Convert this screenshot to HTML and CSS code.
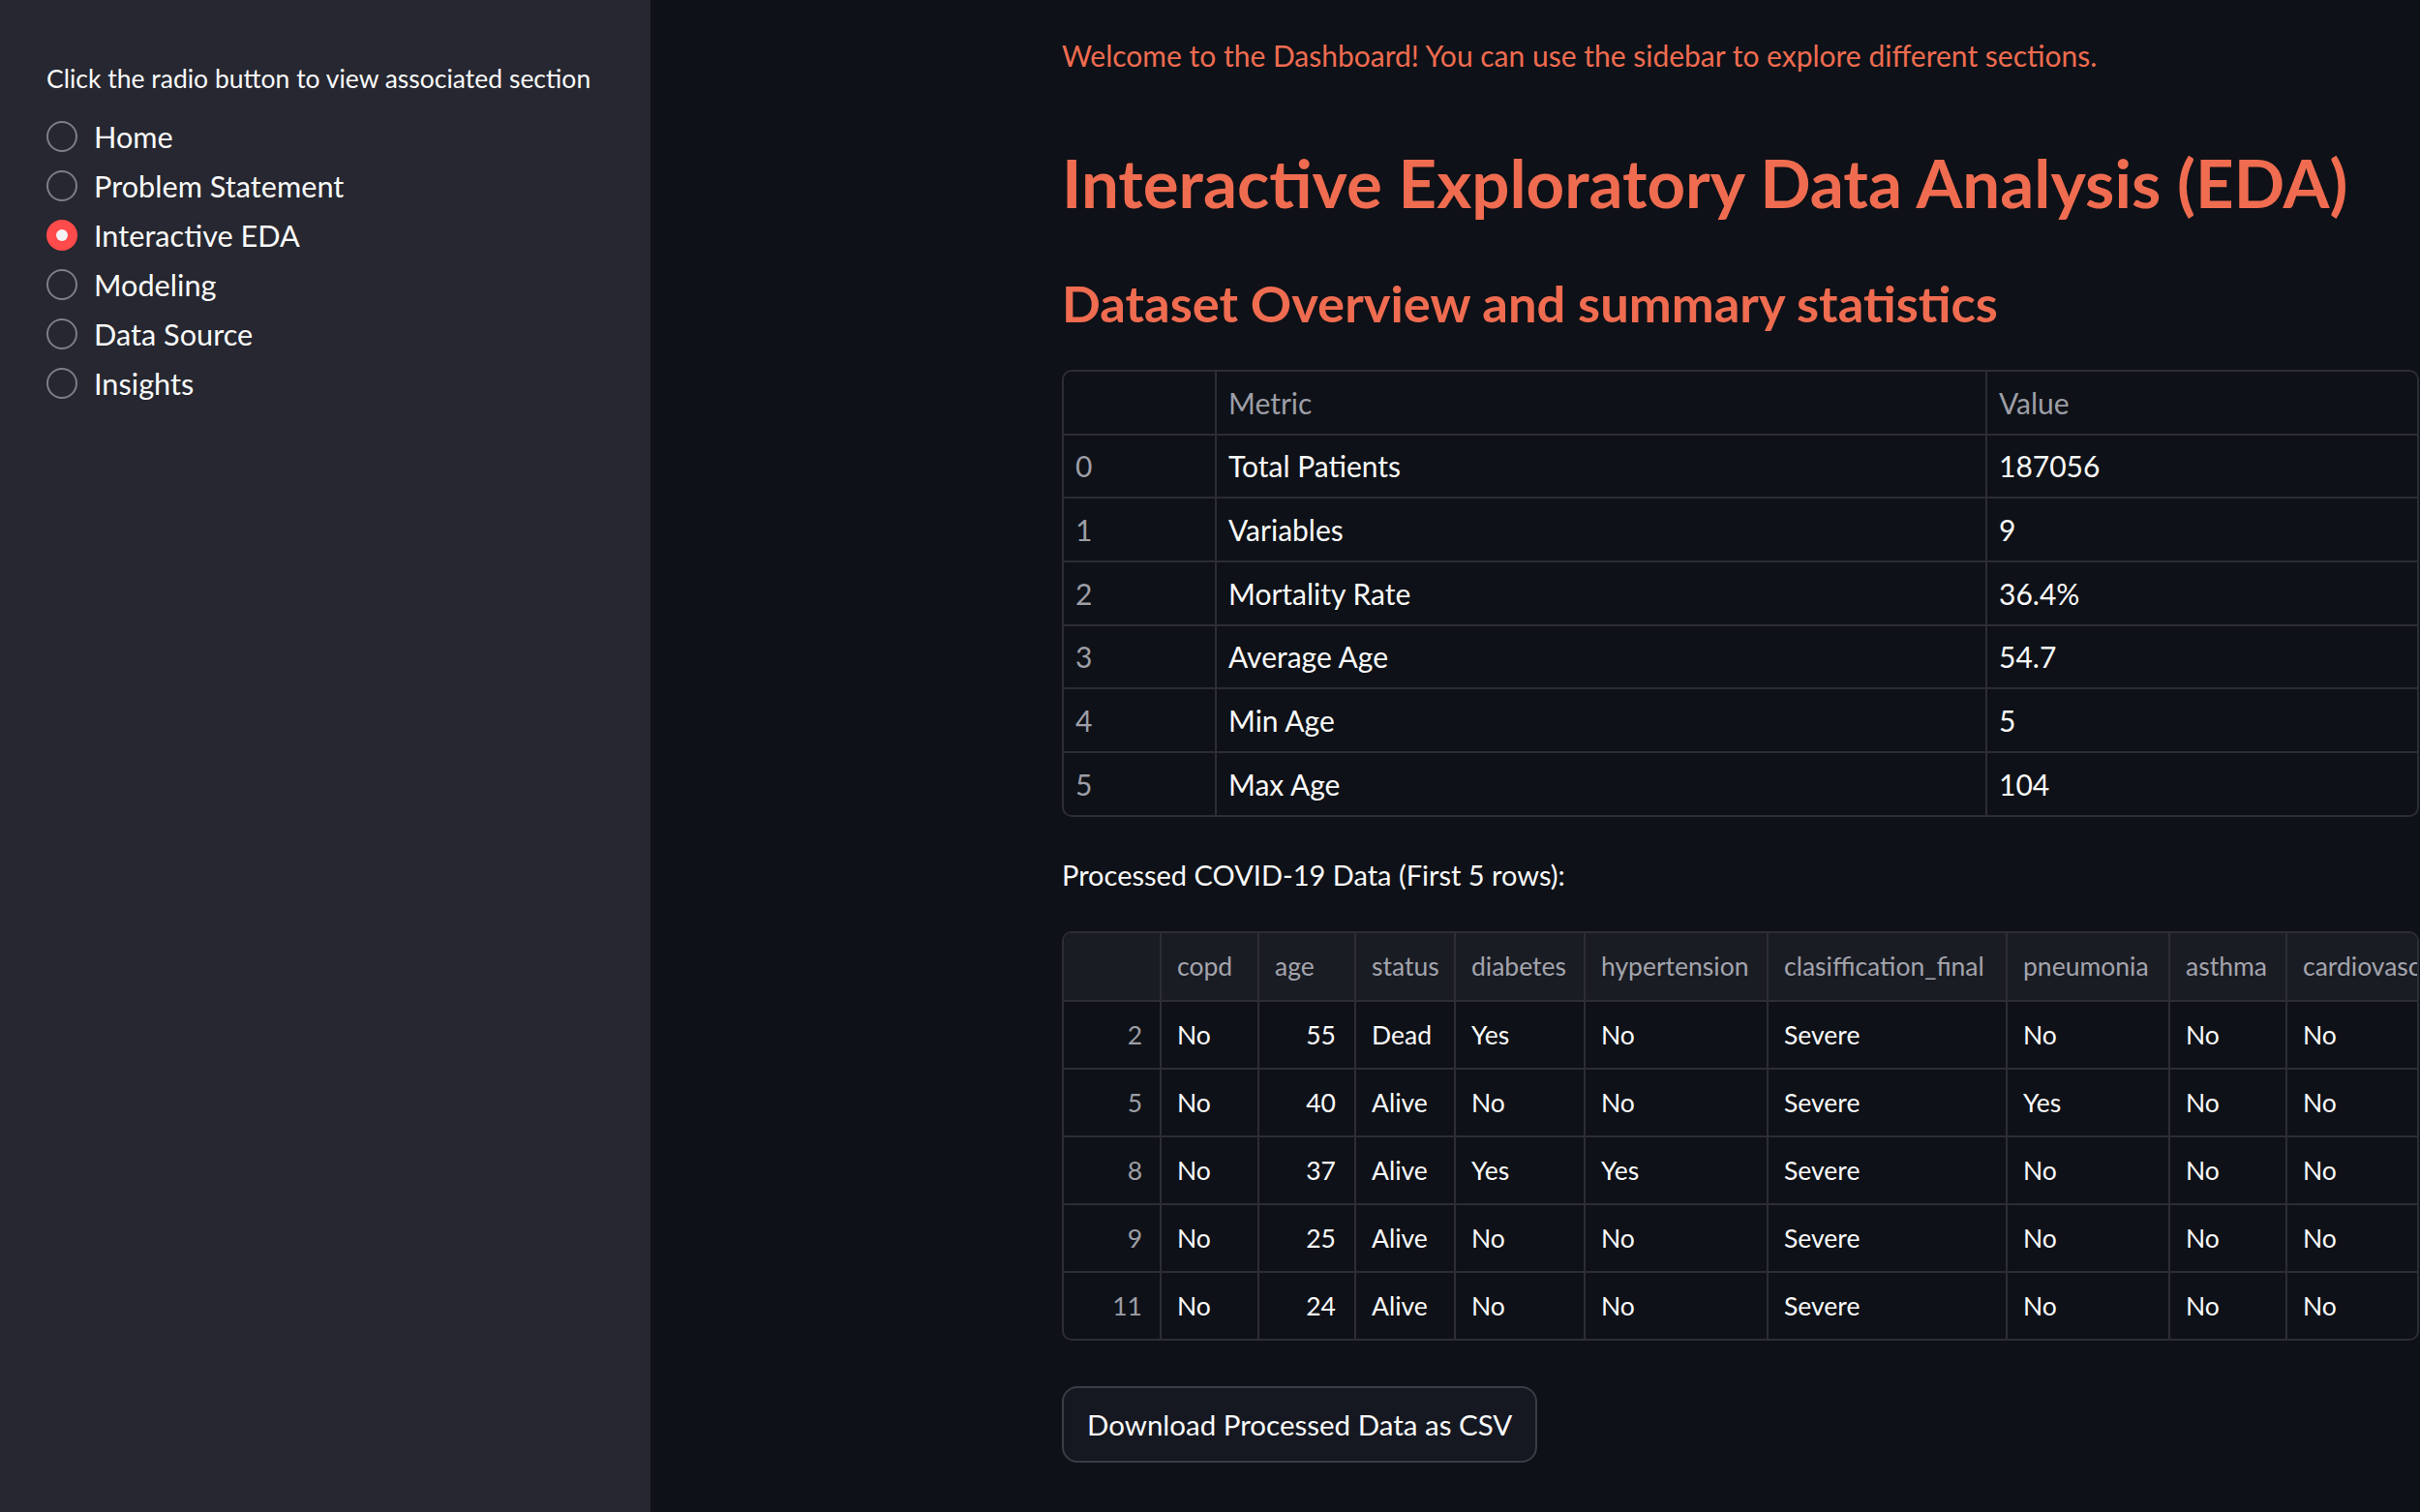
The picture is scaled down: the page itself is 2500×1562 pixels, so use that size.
FILE: index.html
```html
<!DOCTYPE html>
<html lang="en">
<head>
<meta charset="utf-8">
<title>Interactive EDA</title>
<link rel="stylesheet" href="styles.css">
</head>
<body>
<div class="app">
  <aside class="sidebar">
    <p class="side-label">Click the radio button to view associated section</p>
    <div class="radio-list">
      <label class="radio"><span class="dot"></span><span class="radio-text">Home</span></label>
      <label class="radio"><span class="dot"></span><span class="radio-text">Problem Statement</span></label>
      <label class="radio selected"><span class="dot"></span><span class="radio-text">Interactive EDA</span></label>
      <label class="radio"><span class="dot"></span><span class="radio-text">Modeling</span></label>
      <label class="radio"><span class="dot"></span><span class="radio-text">Data Source</span></label>
      <label class="radio"><span class="dot"></span><span class="radio-text">Insights</span></label>
    </div>
  </aside>
  <main class="main">
    <div class="content">
      <p class="welcome">Welcome to the Dashboard! You can use the sidebar to explore different sections.</p>
      <h1 class="title">Interactive Exploratory Data Analysis (EDA)</h1>
      <h2 class="subtitle">Dataset Overview and summary statistics</h2>

      <div class="table-wrap">
        <div class="stat-grid">
          <div class="cell head"></div><div class="cell head">Metric</div><div class="cell head last">Value</div>
          <div class="cell idx">0</div><div class="cell">Total Patients</div><div class="cell last">187056</div>
          <div class="cell idx">1</div><div class="cell">Variables</div><div class="cell last">9</div>
          <div class="cell idx">2</div><div class="cell">Mortality Rate</div><div class="cell last">36.4%</div>
          <div class="cell idx">3</div><div class="cell">Average Age</div><div class="cell last">54.7</div>
          <div class="cell idx">4</div><div class="cell">Min Age</div><div class="cell last">5</div>
          <div class="cell idx bottom">5</div><div class="cell bottom">Max Age</div><div class="cell last bottom">104</div>
        </div>
      </div>

      <p class="caption">Processed COVID-19 Data (First 5 rows):</p>

      <div class="table-wrap df-wrap">
        <div class="df-grid">
          <div class="dcell dhead"></div><div class="dcell dhead">copd</div><div class="dcell dhead">age</div><div class="dcell dhead">status</div><div class="dcell dhead">diabetes</div><div class="dcell dhead">hypertension</div><div class="dcell dhead">clasiffication_final</div><div class="dcell dhead">pneumonia</div><div class="dcell dhead">asthma</div><div class="dcell dhead">cardiovascular</div>

          <div class="dcell didx">2</div><div class="dcell">No</div><div class="dcell num">55</div><div class="dcell">Dead</div><div class="dcell">Yes</div><div class="dcell">No</div><div class="dcell">Severe</div><div class="dcell">No</div><div class="dcell">No</div><div class="dcell">No</div>

          <div class="dcell didx">5</div><div class="dcell">No</div><div class="dcell num">40</div><div class="dcell">Alive</div><div class="dcell">No</div><div class="dcell">No</div><div class="dcell">Severe</div><div class="dcell">Yes</div><div class="dcell">No</div><div class="dcell">No</div>

          <div class="dcell didx">8</div><div class="dcell">No</div><div class="dcell num">37</div><div class="dcell">Alive</div><div class="dcell">Yes</div><div class="dcell">Yes</div><div class="dcell">Severe</div><div class="dcell">No</div><div class="dcell">No</div><div class="dcell">No</div>

          <div class="dcell didx">9</div><div class="dcell">No</div><div class="dcell num">25</div><div class="dcell">Alive</div><div class="dcell">No</div><div class="dcell">No</div><div class="dcell">Severe</div><div class="dcell">No</div><div class="dcell">No</div><div class="dcell">No</div>

          <div class="dcell didx dlast">11</div><div class="dcell dlast">No</div><div class="dcell num dlast">24</div><div class="dcell dlast">Alive</div><div class="dcell dlast">No</div><div class="dcell dlast">No</div><div class="dcell dlast">Severe</div><div class="dcell dlast">No</div><div class="dcell dlast">No</div><div class="dcell dlast">No</div>
        </div>
      </div>

      <button class="download">Download Processed Data as CSV</button>
    </div>
  </main>
</div>
</body>
</html>
```

FILE: styles.css
```css
* { box-sizing: border-box; }

html, body {
  margin: 0;
  padding: 0;
  width: 2500px;
  height: 1562px;
  overflow: hidden;
  background: #0e1117;
  color: #fafafa;
  font-family: Lato, "Noto Sans", sans-serif;
}

.app {
  display: flex;
  height: 1562px;
}

/* Sidebar */
.sidebar {
  flex: 0 0 672px;
  background: #262730;
  padding: 61px 48px 0 48px;
}

.side-label {
  margin: 0;
  font-size: 26.5px;
  line-height: 41.6px;
  color: #fafafa;
}

.radio-list {
  margin-top: 13px;
  display: flex;
  flex-direction: column;
}

.radio {
  display: flex;
  align-items: center;
  height: 51px;
  gap: 17px;
}

.dot {
  width: 32px;
  height: 32px;
  border-radius: 50%;
  border: 2px solid #7c7e88;
  flex: 0 0 32px;
  position: relative;
}

.radio.selected .dot {
  background: #ff4b4b;
  border-color: #ff4b4b;
}

.radio.selected .dot::after {
  content: "";
  position: absolute;
  left: 50%;
  top: 50%;
  width: 12px;
  height: 12px;
  margin: -6px 0 0 -6px;
  border-radius: 50%;
  background: #f3f3f6;
}

.radio-text {
  font-size: 30.7px;
  line-height: 51px;
}

/* Main */
.main {
  flex: 1 1 auto;
  min-width: 0;
  padding: 34px 0 0 425px;
}

.content {
  width: 1402px;
}

.welcome {
  margin: 0;
  font-size: 30px;
  line-height: 46.4px;
  color: #ef6c50;
}

.title {
  margin: 69px 0 0 0;
  font-size: 69px;
  line-height: 80.4px;
  font-weight: 700;
  color: #ef6c50;
}

.subtitle {
  margin: 53px 0 0 0;
  font-size: 52.5px;
  line-height: 60px;
  font-weight: 700;
  color: #ef6c50;
}

.table-wrap {
  margin-top: 39px;
  border: 2px solid #2c2d35;
  border-radius: 10px;
  overflow: hidden;
  width: 1402px;
}

.stat-grid {
  display: grid;
  grid-template-columns: 158px 796px 1fr;
}

.cell {
  height: 65.7px;
  display: flex;
  align-items: center;
  padding: 0 12px;
  font-size: 30px;
  color: #fafafa;
  border-right: 2px solid #2c2d35;
  border-bottom: 2px solid #2c2d35;
}

.cell.last { border-right: none; }
.cell.bottom { border-bottom: none; height: 63.7px; }
.cell.head { color: #9d9ea6; }
.cell.idx { color: #9d9ea6; }

.caption {
  margin: 38px 0 0 0;
  font-size: 29px;
  line-height: 44.8px;
}

.df-wrap {
  margin-top: 35.5px;
}

.df-grid {
  display: grid;
  grid-template-columns: 101px 101px 100px 103px 134px 189px 247px 168px 121px 240px;
  width: max-content;
}

.dcell {
  height: 70px;
  display: flex;
  align-items: center;
  padding: 0 16px;
  font-size: 26.5px;
  color: #fafafa;
  border-right: 2px solid #2c2d35;
  border-bottom: 2px solid #2c2d35;
  white-space: nowrap;
  overflow: hidden;
}

.dcell.dhead {
  height: 71px;
  background: #1a1c24;
  color: #a3a4ac;
}

.dcell.didx {
  justify-content: flex-end;
  color: #9d9ea6;
  padding-right: 18px;
}

.dcell.num {
  justify-content: flex-end;
  padding-right: 19px;
}

.dcell.dlast {
  border-bottom: none;
  height: 68px;
}

.download {
  display: block;
  margin-top: 47px;
  width: 491px;
  height: 79px;
  padding: 0 0 0 24px;
  text-align: left;
  background: #151821;
  border: 2px solid #3b3d46;
  border-radius: 16px;
  color: #fafafa;
  font-family: Lato, "Noto Sans", sans-serif;
  font-size: 29.5px;
}
```
